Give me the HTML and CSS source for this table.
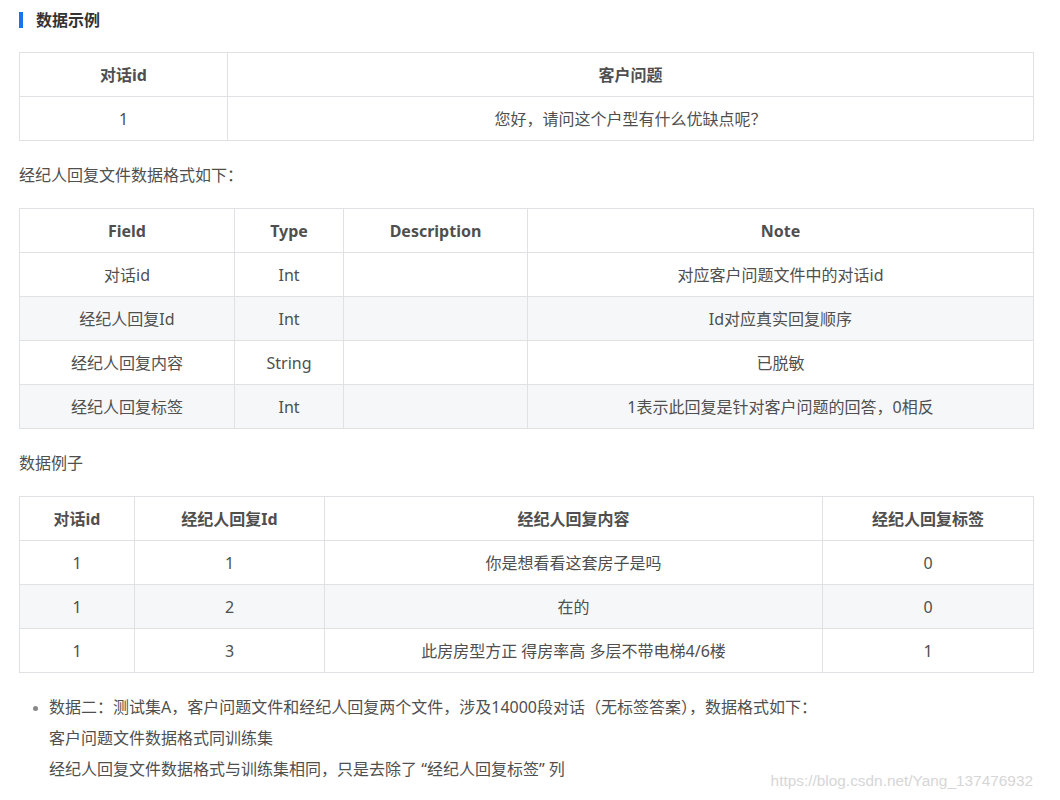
FILE: index.html
```html
<!DOCTYPE html>
<html lang="zh">
<head>
<meta charset="utf-8">
<title>数据示例</title>
<link rel="stylesheet" href="styles.css">
</head>
<body>
<main class="article">
  <h3 class="section-title">数据示例</h3>

  <table class="tbl tbl-q">
    <colgroup><col class="q-c1"><col class="q-c2"></colgroup>
    <thead><tr><th>对话id</th><th>客户问题</th></tr></thead>
    <tbody><tr><td>1</td><td>您好，请问这个户型有什么优缺点呢？</td></tr></tbody>
  </table>

  <p class="para">经纪人回复文件数据格式如下：</p>

  <table class="tbl tbl-f">
    <colgroup><col class="f-c1"><col class="f-c2"><col class="f-c3"><col class="f-c4"></colgroup>
    <thead><tr><th>Field</th><th>Type</th><th>Description</th><th>Note</th></tr></thead>
    <tbody>
      <tr><td>对话id</td><td>Int</td><td></td><td>对应客户问题文件中的对话id</td></tr>
      <tr><td>经纪人回复Id</td><td>Int</td><td></td><td>Id对应真实回复顺序</td></tr>
      <tr><td>经纪人回复内容</td><td>String</td><td></td><td>已脱敏</td></tr>
      <tr><td>经纪人回复标签</td><td>Int</td><td></td><td>1表示此回复是针对客户问题的回答，0相反</td></tr>
    </tbody>
  </table>

  <p class="para para-2">数据例子</p>

  <table class="tbl tbl-e">
    <colgroup><col class="e-c1"><col class="e-c2"><col class="e-c3"><col class="e-c4"></colgroup>
    <thead><tr><th>对话id</th><th>经纪人回复Id</th><th>经纪人回复内容</th><th>经纪人回复标签</th></tr></thead>
    <tbody>
      <tr><td>1</td><td>1</td><td>你是想看看这套房子是吗</td><td>0</td></tr>
      <tr><td>1</td><td>2</td><td>在的</td><td>0</td></tr>
      <tr><td>1</td><td>3</td><td>此房房型方正 得房率高 多层不带电梯4/6楼</td><td>1</td></tr>
    </tbody>
  </table>

  <ul class="list">
    <li>数据二：测试集A，客户问题文件和经纪人回复两个文件，涉及14000段对话（无标签答案），数据格式如下：<br>客户问题文件数据格式同训练集<br>经纪人回复文件数据格式与训练集相同，只是去除了 “经纪人回复标签” 列</li>
  </ul>
</main>
<div class="watermark">https://blog.csdn.net/Yang_137476932</div>
</body>
</html>
```

FILE: styles.css
```css
html, body {
  margin: 0;
  padding: 0;
  background: #ffffff;
}
body {
  font-family: "Microsoft YaHei", "Noto Sans", "Noto Sans CJK SC", sans-serif;
  color: #4d4d4d;
  font-size: 16px;
  position: relative;
  height: 800px;
  overflow: hidden;
}
.article {
  width: 1015px;
  padding: 10px 0 0 19px;
}
.section-title {
  margin: 0;
  display: flex;
  align-items: center;
  gap: 13px;
  font-size: 16px;
  font-weight: bold;
  color: #333333;
  line-height: 20px;
  height: 20px;
}
.section-title::before {
  content: "";
  display: block;
  width: 4px;
  height: 16px;
  background: #1a73e8;
}
.tbl {
  width: 1015px;
  border-collapse: collapse;
  table-layout: fixed;
  margin: 22px 0 0 0;
}
.tbl th, .tbl td {
  border: 1px solid #dfe1e5;
  height: 43px;
  padding: 0 8px;
  text-align: center;
  vertical-align: middle;
  font-size: 16px;
  line-height: 20px;
  color: #4f4f4f;
}
.tbl th {
  font-weight: bold;
  color: #4f4f4f;
}
.tbl tbody tr:nth-child(even) td {
  background: #f6f7f8;
}
.q-c1 { width: 208px; }
.f-c1 { width: 215px; }
.f-c2 { width: 109px; }
.f-c3 { width: 184px; }
.e-c1 { width: 115px; }
.e-c2 { width: 190px; }
.e-c3 { width: 498px; }
.para {
  margin: 23px 0 0 0;
  line-height: 22px;
  font-size: 16px;
  color: #4f4f4f;
}
.para-2 { margin-top: 23px; }
.tbl-f { margin-top: 22px; }
.tbl-e { margin-top: 22px; }
.list {
  margin: 19px 0 0 0;
  padding: 0 0 0 30px;
  color: #4f4f4f;
  line-height: 31px;
  font-size: 16px;
}
.list li::marker {
  color: #888;
  font-size: 13px;
}
.watermark {
  position: absolute;
  right: 27px;
  bottom: 10px;
  font-family: "Liberation Sans", Arial, sans-serif;
  font-size: 15.4px;
  color: #d6d6d6;
}
```
